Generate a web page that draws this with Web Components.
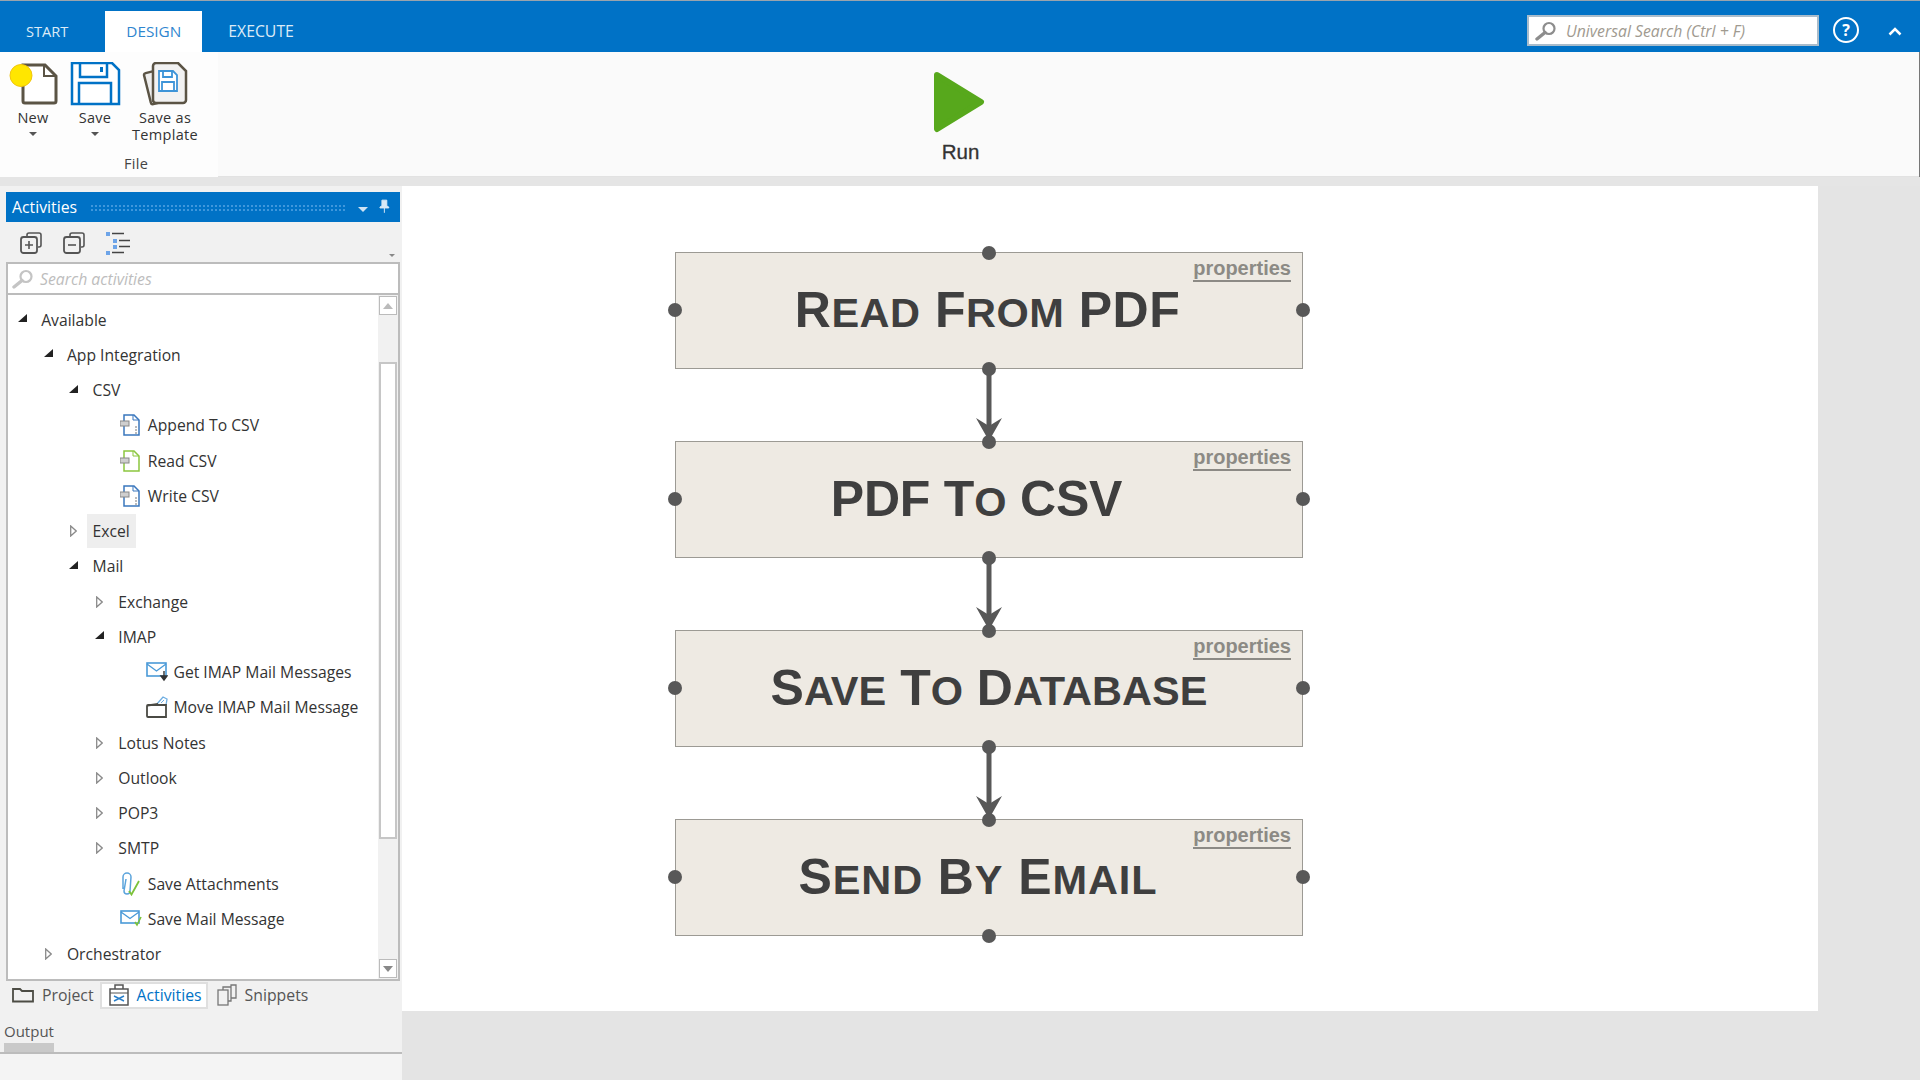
<!DOCTYPE html>
<html>
<head>
<meta charset="utf-8">
<title>Studio</title>
<style>
    html, body {
        margin: 0;
        width: 1920px;
        height: 1080px;
        overflow: hidden;
        background: #e4e4e4;
        font-family: 'Open Sans', 'Noto Sans', sans-serif;
    }
    studio-app { width: 1920px; height: 1080px; }
    svg { display: block; }
</style>
</head>
<body>
<studio-app>
    <ribbon-bar slot="ribbon">
        <ribbon-tab slot="tabs" style="font-size:14.600px;padding-right:37px">START</ribbon-tab>
        <ribbon-tab slot="tabs" active>DESIGN</ribbon-tab>
        <ribbon-tab slot="tabs" style="font-size:15.800px">EXECUTE</ribbon-tab>

        <ribbon-button slot="file" style="--w:66px" menu>
            <svg slot="icon" width="66" height="44" viewBox="0 0 66 44">
                <path d="M23 3h22l11 11v25a2 2 0 0 1-2 2H25a2 2 0 0 1-2-2z" fill="#fff" stroke="#5b5445" stroke-width="3"/>
                <path d="M44 3v11h12" fill="none" stroke="#5b5445" stroke-width="2"/>
                <circle cx="21" cy="13.500" r="11" fill="#ffe600" stroke="#f1c40f"/>
            </svg>
            New
        </ribbon-button>
        <ribbon-button slot="file" style="--w:58px" menu>
            <svg slot="icon" width="58" height="44" viewBox="0 0 58 44">
                <path d="M6 1h40l7 7v34H6z" fill="#fff" stroke="#0072c6" stroke-width="2.500"/>
                <path d="M14 1v14h27V1M13 42V21h32v21" fill="none" stroke="#0072c6" stroke-width="2.500"/>
                <rect x="34" y="5" width="3" height="5" fill="#0072c6"/>
            </svg>
            Save
        </ribbon-button>
        <ribbon-button slot="file" style="--w:82px">
            <svg slot="icon" width="82" height="44" viewBox="0 0 82 44">
                <rect x="23" y="7" width="34" height="32" rx="2" fill="#eee" stroke="#5b5445" stroke-width="2.500" transform="rotate(-14 40 23)"/>
                <path d="M32 1h22l8 8v29a3 3 0 0 1-3 3H32a3 3 0 0 1-3-3V4a3 3 0 0 1 3-3z" fill="#f2f2f2" stroke="#5b5445" stroke-width="2.500"/>
                <path d="M35 9h14l4 4v16H35z" fill="#fff" stroke="#3d94d8" stroke-width="1.800"/>
                <path d="M39 9v6h9V9M38 29v-9h12v9" fill="none" stroke="#3d94d8" stroke-width="1.800"/>
            </svg>
            Save as<br>Template
        </ribbon-button>

        <run-button slot="run">Run</run-button>
    </ribbon-bar>

    <activities-panel slot="side">
        <svg slot="tools" width="22" height="22" viewBox="0 0 22 22"><path d="M7 4V3a2 2 0 0 1 2-2h10a2 2 0 0 1 2 2v10a2 2 0 0 1-2 2h-1" fill="none" stroke="#555" stroke-width="1.600"/><rect x="1" y="5" width="16" height="16" rx="2.500" fill="none" stroke="#555" stroke-width="1.800"/><path d="M5 13h8M9 9v8" stroke="#555" stroke-width="1.600"/></svg>
        <svg slot="tools" width="22" height="22" viewBox="0 0 22 22"><path d="M7 4V3a2 2 0 0 1 2-2h10a2 2 0 0 1 2 2v10a2 2 0 0 1-2 2h-1" fill="none" stroke="#555" stroke-width="1.600"/><rect x="1" y="5" width="16" height="16" rx="2.500" fill="none" stroke="#555" stroke-width="1.800"/><path d="M5 13h8" stroke="#555" stroke-width="1.600"/></svg>
        <svg slot="tools" width="24" height="24" viewBox="0 0 24 24"><path d="M0 1h4v4H0zM7 8h4v4H7zM7 14h4v4H7zM0 20h4v4H0z" fill="#6da4e8"/><path d="M6 2.500h12M13 9.500h11M13 15.500h11M6 21.500h12" stroke="#444" stroke-width="1.600"/></svg>

        <tree-row level="0" state="open">Available</tree-row>
        <tree-row level="1" state="open">App Integration</tree-row>
        <tree-row level="2" state="open">CSV</tree-row>
        <tree-row level="3">
            <svg slot="icon" width="21" height="22" viewBox="0 0 21 22"><path d="M4 1h10l5 5v15H4z" fill="#fff" stroke="#3a77bd" stroke-width="1.500"/><path d="M13 1v5h6" fill="none" stroke="#3a77bd"/><rect x="0" y="7" width="9" height="5" fill="#cfcfcf" stroke="#888"/><path d="M15 13h2M15 16h2M15 19h2" stroke="#777"/></svg>
            Append To CSV
        </tree-row>
        <tree-row level="3">
            <svg slot="icon" width="21" height="22" viewBox="0 0 21 22"><path d="M4 1h10l5 5v15H4z" fill="#fff" stroke="#8cc63f" stroke-width="1.500"/><path d="M13 1v5h6" fill="none" stroke="#8cc63f"/><rect x="0" y="8" width="9" height="5" fill="#cfcfcf" stroke="#888"/></svg>
            Read CSV
        </tree-row>
        <tree-row level="3">
            <svg slot="icon" width="21" height="22" viewBox="0 0 21 22"><path d="M4 1h10l5 5v15H4z" fill="#fff" stroke="#3a77bd" stroke-width="1.500"/><path d="M13 1v5h6" fill="none" stroke="#3a77bd"/><rect x="0" y="7" width="9" height="5" fill="#cfcfcf" stroke="#888"/><path d="M15 13h2M15 16h2M15 19h2" stroke="#777"/></svg>
            Write CSV
        </tree-row>
        <tree-row level="2" state="closed" hover>Excel</tree-row>
        <tree-row level="2" state="open">Mail</tree-row>
        <tree-row level="3" state="closed">Exchange</tree-row>
        <tree-row level="3" state="open">IMAP</tree-row>
        <tree-row level="4">
            <svg slot="icon" width="22" height="20" viewBox="0 0 22 20"><rect x="1" y="1" width="19" height="13" fill="#fff" stroke="#4a9ad8" stroke-width="1.600"/><path d="M1 2l9.500 7L20 2" fill="none" stroke="#4a9ad8" stroke-width="1.400"/><path d="M18 9v6M15 14h6l-3 4z" stroke="#333" fill="#333" stroke-width="1.400"/></svg>
            Get IMAP Mail Messages
        </tree-row>
        <tree-row level="4">
            <svg slot="icon" width="22" height="22" viewBox="0 0 22 22"><path d="M11 8l6-7 4 2-1 6" fill="none" stroke="#6eaee2" stroke-width="1.300"/><path d="M15 7l3-3" stroke="#6eaee2"/><path d="M1.500 9.500L12 8M1 10a1 1 0 0 1 1-1h18v12H2a1 1 0 0 1-1-1z" fill="none" stroke="#4a4a44" stroke-width="1.800"/></svg>
            Move IMAP Mail Message
        </tree-row>
        <tree-row level="3" state="closed">Lotus Notes</tree-row>
        <tree-row level="3" state="closed">Outlook</tree-row>
        <tree-row level="3" state="closed">POP3</tree-row>
        <tree-row level="3" state="closed">SMTP</tree-row>
        <tree-row level="3">
            <svg slot="icon" width="22" height="24" viewBox="0 0 22 24"><path d="M3 17V5a4 4 0 0 1 8 0l-1 14a3 3 0 0 1-6 0L6 7" fill="none" stroke="#5ba4dc" stroke-width="1.500"/><path d="M9 19l2.500 3.500L19 9" fill="none" stroke="#7cc23a" stroke-width="1.800"/></svg>
            Save Attachments
        </tree-row>
        <tree-row level="3">
            <svg slot="icon" width="22" height="18" viewBox="0 0 22 18"><rect x="1" y="1" width="18" height="12" fill="#fff" stroke="#4a9ad8" stroke-width="1.600"/><path d="M1 2l9 6.500L19 2" fill="none" stroke="#4a9ad8" stroke-width="1.400"/><path d="M15 12l2 3 4-8" fill="none" stroke="#7cc23a" stroke-width="1.600"/></svg>
            Save Mail Message
        </tree-row>
        <tree-row level="1" state="closed">Orchestrator</tree-row>

        <panel-tab slot="tabs">
            <svg slot="icon" width="22" height="16" viewBox="0 0 22 16"><path d="M1 14V2h7l2 2h11v10.500H1z" fill="none" stroke="#4c4c44" stroke-width="1.800"/></svg>
            Project
        </panel-tab>
        <panel-tab slot="tabs" active>
            <svg slot="icon" width="20" height="23" viewBox="0 0 20 23"><path d="M6 6V2h8v4" fill="none" stroke="#555" stroke-width="1.500"/><rect x="1" y="6" width="18" height="16" fill="none" stroke="#555" stroke-width="1.500"/><path d="M1 10h18" stroke="#555"/><path d="M5 13l10 5M5 18l10-5" stroke="#2a7fc9" stroke-width="1.400"/></svg>
            Activities
        </panel-tab>
        <panel-tab slot="tabs">
            <svg slot="icon" width="20" height="22" viewBox="0 0 20 22"><rect x="1" y="6" width="10" height="15" fill="#f1f1f1" stroke="#777" stroke-width="1.300"/><path d="M6 6V3h8v14h-3M14 3V1h5v13h-5" fill="none" stroke="#777" stroke-width="1.300"/></svg>
            Snippets
        </panel-tab>
    </activities-panel>

    <flow-canvas slot="canvas">
        <flow-node style="--track:.5px;--shift:3px">R<small-cap>ead</small-cap> F<small-cap>rom</small-cap> PDF</flow-node>
        <flow-link></flow-link>
        <flow-node style="--track:-.2px;--shift:25px">PDF T<small-cap>o</small-cap> CSV</flow-node>
        <flow-link></flow-link>
        <flow-node>S<small-cap>ave</small-cap> T<small-cap>o</small-cap> D<small-cap>atabase</small-cap></flow-node>
        <flow-link></flow-link>
        <flow-node style="--track:.9px;--shift:22px">S<small-cap>end</small-cap> B<small-cap>y</small-cap> E<small-cap>mail</small-cap></flow-node>
    </flow-canvas>
</studio-app>

<script>
const magnifier = (color) => `
<svg width="22" height="20" viewBox="0 0 22 20"><circle cx="14" cy="7.500" r="5.500" fill="none" stroke="${color}" stroke-width="2.200"/><path d="M10 11.500L2 18" stroke="${color}" stroke-width="3.400" stroke-linecap="round"/></svg>`;

// small helper, every element is just a template in an open shadow root
function defineElement(name, markup, setup) {
    const template = document.createElement('template');
    template.innerHTML = markup;
    customElements.define(name, class extends HTMLElement {
        constructor() {
            super();
            this.attachShadow({ mode: 'open' });
            this.shadowRoot.appendChild(template.content.cloneNode(true));
        }
        connectedCallback() {
            if (setup) setup(this);
        }
    });
}

defineElement('studio-app', `
<style>
    :host { display: flex; flex-direction: column; background: #e4e4e4; }
    .line { height: 1px; background: #9aa4ad; }
    .band { height: 9px; background: #e5e5e5; }
    .main { flex: 1; display: flex; min-height: 0; }
    .right { width: 1416px; height: 825px; }
</style>
<div class="line"></div>
<slot name="ribbon"></slot>
<div class="band"></div>
<div class="main">
    <slot name="side"></slot>
    <div class="right"><slot name="canvas"></slot></div>
</div>
`);

defineElement('ribbon-bar', `
<style>
    :host { display: block; }
    .top { height: 51px; background: #0072c6; display: flex; align-items: flex-end; }
    .gap { flex: 1; }
    .search {
        width: 282px; height: 27px; margin-bottom: 6px; display: flex; align-items: center; gap: 9px;
        background: #fff; border: 2px solid #a9bccb; padding-left: 6px; box-sizing: content-box;
        font: italic 15.800px 'Open Sans', sans-serif; color: #a09a90; white-space: nowrap;
    }
    .help { width: 22px; height: 22px; margin: 0 0 9px 14px; border: 2px solid #fff; border-radius: 50%;
        color: #fff; font: bold 16px/22px 'Open Sans', sans-serif; text-align: center; }
    .up { margin: 0 18px 16px 29px; }
    .body { height: 125px; background: #fafafa; display: flex; border-right: 1px solid #777; box-shadow: inset 0 -1px 0 #e2e2e2; }
    .file { width: 218px; background: #fdfdfd; box-sizing: border-box; padding-top: 10px; }
    .buttons { display: flex; height: 94px; }
    .caption { height: 16px; padding-left: 54px; text-align: center; font-size: 14.500px; letter-spacing: .3px; line-height: 16px; color: #444; }
    .run { margin-left: 713px; }
</style>
<div class="top">
    <slot name="tabs"></slot>
    <div class="gap"></div>
    <div class="search">${magnifier('#8d8d8d')}<span>Universal Search (Ctrl + F)</span></div>
    <div class="help">?</div>
    <svg class="up" width="14" height="9" viewBox="0 0 14 9"><path d="M1.500 7.500L7 2l5.500 5.500" fill="none" stroke="#fff" stroke-width="2.500"/></svg>
</div>
<div class="body">
    <div class="file">
        <div class="buttons"><slot name="file"></slot></div>
        <div class="caption">File</div>
    </div>
    <div class="run"><slot name="run"></slot></div>
</div>
`);

defineElement('ribbon-tab', `
<style>
    :host { display: block; height: 41px; line-height: 41px; padding: 0 35px 0 26px; color: #dcebf7; font-size: 15.300px; }
    :host([active]) { background: #fff; color: #2f86cf; padding: 0 21px; }
</style>
<slot></slot>
`);

defineElement('ribbon-button', `
<style>
    :host { display: block; width: var(--w); text-align: center; font-size: 14.500px; letter-spacing: .3px; line-height: 16.500px; color: #333; }
    .icon { height: 48px; }
    .arrow { display: none; width: 0; height: 0; margin: 5px auto 0; border: 4px solid transparent; border-top-color: #555; border-bottom: 0; }
    :host([menu]) .arrow { display: block; }
</style>
<div class="icon"><slot name="icon"></slot></div>
<slot></slot>
<div class="arrow"></div>
`);

defineElement('run-button', `
<style>
    :host { display: block; width: 59px; padding-top: 18px; text-align: center; font: 20.500px/24px 'Liberation Sans', sans-serif; color: #333; -webkit-text-stroke: .3px #333; }
    svg { display: block; margin: 0 0 6px; }
</style>
<svg width="54" height="64" viewBox="0 0 54 64"><path d="M6 5l44 27L6 59z" fill="#57a81c" stroke="#57a81c" stroke-width="6" stroke-linejoin="round"/></svg>
<slot></slot>
`);

defineElement('activities-panel', `
<style>
    :host { display: flex; flex-direction: column; width: 402px; height: 894px; background: #f1f1f1; box-sizing: border-box; font-size: 15.700px; }
    .box { margin: 6px 2px 0 6px; }
    .head { height: 30px; background: #0072c6; color: #fff; display: flex; align-items: center; padding: 0 10px 0 6px; font-size: 15.800px; }
    .dots { width: 264px; height: 9px; margin: 2px 0 0 13px; background: radial-gradient(#3f97dc 1px, transparent 1.300px) 0 0 / 4px 4px; }
    .tri { width: 0; height: 0; margin: 4px 0 0 11px; border: 5px solid transparent; border-top-color: #cfe3f4; border-bottom: 0; }
    .pin { margin: 0 0 2px 11px; }
    .tools { height: 40px; display: flex; align-items: center; gap: 21px; padding: 2px 0 0 14px; box-sizing: border-box; position: relative; }
    .grip { position: absolute; right: 5px; bottom: 5px; width: 0; height: 0; border: 3px solid transparent; border-top-color: #888; border-bottom: 0; box-shadow: 0 -4px 0 -2px #888; }
    .search { height: 29px; display: flex; align-items: center; gap: 6px; background: #fff; border: solid #bcbcbc; border-width: 2px 2px 0 2px; padding-left: 4px; font: italic 15.800px 'Open Sans', sans-serif; color: #bdbdbd; }
    .tree { height: 688px; background: #fff; border: 2px solid #bcbcbc; box-sizing: border-box; display: flex; }
    .rows { flex: 1; padding-top: 7px; }
    .bar { width: 20px; background: #f1f1f1; display: flex; flex-direction: column; }
    .btn { height: 17px; margin: 1px 1px 0; background: #fff; border: 1px solid #bbb; display: flex; align-items: center; justify-content: center; }
    .thumb { margin: 47px 1px 0; height: 477px; background: #fff; border: 2px solid #c6c6c6; box-sizing: border-box; }
    .bar .low { margin-top: auto; margin-bottom: 1px; }
    .tabs { height: 29px; display: flex; align-items: flex-start; padding-left: 2px; margin-top: 1px; }
    .out { height: 41px; color: #555; font-size: 15px; line-height: 20px; padding: 10px 0 0 4px; box-sizing: border-box; }
    .out i { display: block; width: 50px; height: 9px; background: #c9c9c9; margin-top: 2px; }
    .rule { height: 2px; background: #bcbcbc; }
    .rest { flex: 1; background: #f4f4f4; }
</style>
<div class="box">
    <div class="head">
        <span>Activities</span>
        <div class="dots"></div>
        <div class="tri"></div>
        <svg class="pin" width="11" height="14" viewBox="0 0 11 14"><path d="M3 1h5v6l2 1v1H1V8l2-1zM5.500 9v5" fill="#d9e9f6" stroke="#d9e9f6"/></svg>
    </div>
    <div class="tools"><slot name="tools"></slot><div class="grip"></div></div>
    <div class="search">${magnifier('#c4c4c4')}<span>Search activities</span></div>
    <div class="tree">
        <div class="rows"><slot></slot></div>
        <div class="bar">
            <div class="btn"><svg width="10" height="6" viewBox="0 0 10 6"><path d="M5 0l5 6H0z" fill="#bbb"/></svg></div>
            <div class="thumb"></div>
            <div class="btn low"><svg width="10" height="6" viewBox="0 0 10 6"><path d="M0 0h10L5 6z" fill="#888"/></svg></div>
        </div>
    </div>
    <div class="tabs"><slot name="tabs"></slot></div>
</div>
<div class="out">Output<i></i></div>
<div class="rule"></div>
<div class="rest"></div>
`);

defineElement('tree-row', `
<style>
    :host { display: block; height: 35.250px; color: #333; --step: 25.700px; }
    .row { height: 100%; display: flex; align-items: center; padding-left: calc(var(--level) * var(--step) + 7.800px); }
    .arrow { width: 25.400px; flex: none; }
    .open { display: none; }
    .closed { display: none; margin-left: 3px; }
    :host([state=open]) .open { display: block; margin-top: -3px; margin-left: 2px; }
    :host([state=closed]) .closed { display: block; }
    .icon { display: none; width: 29.500px; flex: none; margin-left: 2px; }
    .icon.on { display: block; margin-right: -2px; }
    .label { line-height: 34px; white-space: nowrap; }
    :host([hover]) .label { background: #eeeeee; margin-left: -6px; padding: 0 6px; }
</style>
<div class="row">
    <div class="arrow">
        <svg class="open" width="9" height="8" viewBox="0 0 9 8"><path d="M9 0v8H0z" fill="#222"/></svg>
        <svg class="closed" width="7" height="12" viewBox="0 0 7 12"><path d="M.7 1l5.500 5-5.500 5z" fill="#fff" stroke="#8a8a8a" stroke-width="1.300"/></svg>
    </div>
    <div class="icon"><slot name="icon"></slot></div>
    <div class="label"><slot></slot></div>
</div>
`, (el) => {
    el.style.setProperty('--level', el.getAttribute('level'));
    if (el.querySelector('[slot=icon]')) {
        el.shadowRoot.querySelector('.icon').classList.add('on');
    }
});

defineElement('panel-tab', `
<style>
    :host { display: flex; align-items: center; gap: 8px; height: 27px; padding: 0 6px 2px 4px; color: #555; font-size: 15.800px; box-sizing: border-box; }
    :host([active]) { background: #fff; border: 2px solid #dfdfdf; color: #0072c6; padding: 0 4px 2px 7px; margin-right: 5px; }
</style>
<slot name="icon"></slot>
<slot></slot>
`);

defineElement('flow-canvas', `
<style>
    :host { display: flex; flex-direction: column; align-items: flex-start; width: 1416px; height: 825px; box-sizing: border-box; background: #fff; padding: 66px 0 0 273px; }
</style>
<slot></slot>
`);

defineElement('flow-node', `
<style>
    :host { display: block; width: 628px; height: 117px; box-sizing: border-box; position: relative; background: #eeeae3; border: 1px solid #9c9a94; }
    .text { height: 100%; display: flex; align-items: center; justify-content: center; padding: 0 var(--shift, 0) 2px 0; box-sizing: border-box;
        font: bold 50px/1 'Liberation Sans', sans-serif; letter-spacing: var(--track, 0); color: #3f3f3f; white-space: nowrap; }
    .props { position: absolute; right: 11px; top: 3px; font: bold 20px/24px 'Liberation Sans', sans-serif; color: #8c8a85; border-bottom: 2px solid #8c8a85; }
    .dot { position: absolute; width: 14px; height: 14px; border-radius: 50%; background: #585858; }
    .n { left: 306px; top: -7px; }
    .s { left: 306px; bottom: -8px; }
    .w { left: -8px; top: 50px; }
    .e { right: -8px; top: 50px; }
</style>
<div class="text"><span><slot></slot></span></div>
<div class="props">properties</div>
<div class="dot n"></div><div class="dot s"></div><div class="dot w"></div><div class="dot e"></div>
`);

// the lower case letters of a node title, drawn as larger small caps than the browser makes
// no whitespace in this template, it sits inside a word
defineElement('small-cap', `<style>:host { display: inline; font-size: .83em; text-transform: uppercase; }</style><slot></slot>`);

defineElement('flow-link', `
<style>
    :host { display: block; width: 628px; height: 72px; }
    svg { display: block; margin: 0 auto; }
</style>
<svg width="30" height="72" viewBox="0 0 30 72">
    <path d="M15 0v60" stroke="#585858" stroke-width="5"/>
    <path d="M2 49l13 8 13-8-13 23z" fill="#585858"/>
</svg>
`);
</script>
</body>
</html>
